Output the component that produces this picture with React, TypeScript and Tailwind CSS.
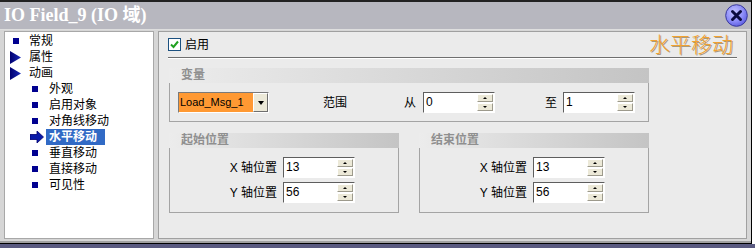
import React from 'react'

type TreeItem = {
  label: string
  level: 0 | 1
  icon: 'bullet' | 'expand' | 'arrow'
  selected?: boolean
}

const treeItems: TreeItem[] = [
  { label: '常规', level: 0, icon: 'bullet' },
  { label: '属性', level: 0, icon: 'expand' },
  { label: '动画', level: 0, icon: 'expand' },
  { label: '外观', level: 1, icon: 'bullet' },
  { label: '启用对象', level: 1, icon: 'bullet' },
  { label: '对角线移动', level: 1, icon: 'bullet' },
  { label: '水平移动', level: 1, icon: 'arrow', selected: true },
  { label: '垂直移动', level: 1, icon: 'bullet' },
  { label: '直接移动', level: 1, icon: 'bullet' },
  { label: '可见性', level: 1, icon: 'bullet' },
]

function TreeIcon({ icon }: { icon: TreeItem['icon'] }) {
  if (icon === 'bullet') {
    return <div className="h-[6px] w-[6px] bg-[#000090]" />
  }
  if (icon === 'expand') {
    return (
      <svg width="11" height="13" viewBox="0 0 11 13">
        <defs>
          <linearGradient id="tri" x1="0" y1="0" x2="1" y2="0">
            <stop offset="0" stopColor="#000070" />
            <stop offset="1" stopColor="#1a2ab8" />
          </linearGradient>
        </defs>
        <polygon points="0,0 11,6.5 0,13" fill="url(#tri)" />
      </svg>
    )
  }
  return (
    <svg width="14" height="12" viewBox="0 0 14 12">
      <polygon points="0,3.5 7,3.5 7,0 13.5,6 7,12 7,8.5 0,8.5" fill="#0a1aa8" stroke="#000070" strokeWidth="0.8" />
    </svg>
  )
}

function TreeRow({ item }: { item: TreeItem }) {
  const slot = item.level === 0 ? 'w-[24px]' : 'w-[41px]'
  let pad = 'pl-[8px]'
  if (item.level === 0 && item.icon === 'expand') pad = 'pl-[5px]'
  if (item.level === 1) pad = item.icon === 'arrow' ? 'pl-[25px]' : 'pl-[27px]'

  return (
    <div className="flex h-[16px] items-center">
      <div className={`flex shrink-0 items-center ${slot} ${pad}`}>
        <TreeIcon icon={item.icon} />
      </div>
      <span
        className={
          item.selected
            ? 'h-[16px] w-[59px] bg-[#316ac5] pl-[3px] text-[12px] leading-[16px] font-bold text-white'
            : 'text-[12px] leading-[16px] text-black' + (item.level === 1 ? ' pl-[3px]' : '')
        }
      >
        {item.label}
      </span>
    </div>
  )
}

function SpinButton({ up }: { up: boolean }) {
  return (
    <div className="flex flex-1 items-center justify-center border border-t-white border-l-white border-r-[#9d9a8c] border-b-[#9d9a8c] bg-[#ece9d8]">
      {up ? (
        <div className="h-0 w-0 border-x-[2px] border-b-[2px] border-x-transparent border-b-black" />
      ) : (
        <div className="h-0 w-0 border-x-[2px] border-t-[2px] border-x-transparent border-t-black" />
      )}
    </div>
  )
}

function SpinBox({ value }: { value: string }) {
  return (
    <div className="flex h-[21px] w-[72px] shrink-0 border border-t-[#5e5e5e] border-l-[#5e5e5e] border-r-white border-b-white bg-white">
      <div className="flex-1 pl-[2px] text-[12px] leading-[19px] text-black">{value}</div>
      <div className="flex w-[17px] flex-col gap-[1px] py-[1px] pr-[1px]">
        <SpinButton up />
        <SpinButton up={false} />
      </div>
    </div>
  )
}

function Group({ title, className, children }: { title: string; className: string; children: React.ReactNode }) {
  return (
    <div className={className}>
      <div className="h-[15px] bg-linear-to-r from-[#ececec] to-[#c4c4c4] pl-[12px] text-[12px] leading-[15px] font-bold text-[#8f8f8f]">
        {title}
      </div>
      <div className="border-x border-b border-[#a4a4a4]">{children}</div>
    </div>
  )
}

function PositionRow({ axis, value }: { axis: string; value: string }) {
  return (
    <div className="flex items-center">
      <div className="w-[107px] shrink-0 text-right text-[12px] text-black">{axis} 轴位置</div>
      <div className="ml-[6px]">
        <SpinBox value={value} />
      </div>
    </div>
  )
}

function PositionGroup({ title }: { title: string }) {
  return (
    <Group title={title} className="w-[230px]">
      <div className="flex flex-col gap-[4px] pt-[9px] pb-[9px]">
        <PositionRow axis="X" value="13" />
        <PositionRow axis="Y" value="56" />
      </div>
    </Group>
  )
}

function CloseButton() {
  return (
    <svg width="23" height="23" viewBox="0 0 23 23">
      <defs>
        <radialGradient id="cb" cx="0.4" cy="0.35" r="0.7">
          <stop offset="0" stopColor="#c4c4ff" />
          <stop offset="0.6" stopColor="#8c8cf8" />
          <stop offset="1" stopColor="#5a5ae0" />
        </radialGradient>
      </defs>
      <circle cx="11.5" cy="11.5" r="10.8" fill="url(#cb)" stroke="#3a3a9a" strokeWidth="1" />
      <path d="M7.5 7.5 L15.5 15.5 M15.5 7.5 L7.5 15.5" stroke="#0c0c40" strokeWidth="3" strokeLinecap="round" />
    </svg>
  )
}

export default function App() {
  return (
    <div className="flex h-[248px] w-[755px] flex-col overflow-hidden bg-[#5a5a80] font-['Liberation_Sans','Noto_Sans_CJK_SC',sans-serif]">
      <div className="flex bg-white">
        <div className="flex h-[244px] w-[752px] flex-col border-t-2 border-r border-b border-t-[#222222] border-r-black border-b-black bg-[#d6d6d6]">
          {/* title bar */}
          <div className="flex h-[28px] shrink-0 items-center justify-between border-b border-[#dedede] bg-[#b7b7bf] pl-[4px] pr-[3px]">
            <span className="font-['Liberation_Serif','Noto_Sans_CJK_SC',serif] text-[18px] font-bold text-white">
              IO Field_9 (IO 域)
            </span>
            <CloseButton />
          </div>

          {/* body */}
          <div className="flex flex-1 gap-[4px] border-b-2 border-[#a0a0a0] pt-[1px] pr-[4px] pb-[2px] pl-[4px]">
            <div className="w-[150px] shrink-0 border border-[#a8a8a8] bg-white pt-[1px]">
              {treeItems.map((item) => (
                <TreeRow key={item.label} item={item} />
              ))}
            </div>

            <div className="flex-1 border border-[#a0a0a0] bg-[#ebebeb]">
              <div className="flex h-[25px] items-center justify-between px-[9px]">
                <div className="flex items-center gap-[4px]">
                  <div className="flex h-[13px] w-[13px] items-center justify-center border border-[#1c5180] bg-white">
                    <svg width="9" height="9" viewBox="0 0 9 9">
                      <path d="M1 4.5 L3.5 7 L8 1.5" fill="none" stroke="#21a121" strokeWidth="2" />
                    </svg>
                  </div>
                  <span className="text-[12px] text-black">启用</span>
                </div>
                <span className="mr-[4px] text-[21px] leading-none font-light text-[#f2a231] [text-shadow:1px_1px_0_#a89a80]">
                  水平移动
                </span>
              </div>
              <div className="mx-[9px] h-[2px] border-t border-[#6f6f6f] bg-white" />

              <Group title="变量" className="mt-[9px] ml-[10px] w-[480px]">
                <div className="flex items-center pt-[9px] pb-[8px] pl-[8px]">
                  <div className="flex h-[21px] w-[91px] shrink-0 border border-t-[#7a7a7a] border-l-[#7a7a7a] border-r-white border-b-white">
                    <div className="flex-1 bg-[#ff9933] pl-[1px] text-[11px] leading-[19px] text-black">Load_Msg_1</div>
                    <div className="flex w-[15px] items-center justify-center border border-t-white border-l-white border-r-[#6f6f6f] border-b-[#6f6f6f] bg-[#ece9d8]">
                      <div className="h-0 w-0 border-x-[3px] border-t-[4px] border-x-transparent border-t-black" />
                    </div>
                  </div>
                  <span className="ml-[54px] text-[12px] text-black">范围</span>
                  <span className="ml-[57px] text-[12px] text-black">从</span>
                  <div className="ml-[7px]">
                    <SpinBox value="0" />
                  </div>
                  <span className="ml-[50px] text-[12px] text-black">至</span>
                  <div className="ml-[6px]">
                    <SpinBox value="1" />
                  </div>
                </div>
              </Group>

              <div className="mt-[11px] ml-[10px] flex gap-[20px]">
                <PositionGroup title="起始位置" />
                <PositionGroup title="结束位置" />
              </div>
            </div>
          </div>
        </div>
        <div className="flex-1 bg-white" />
      </div>
    </div>
  )
}
